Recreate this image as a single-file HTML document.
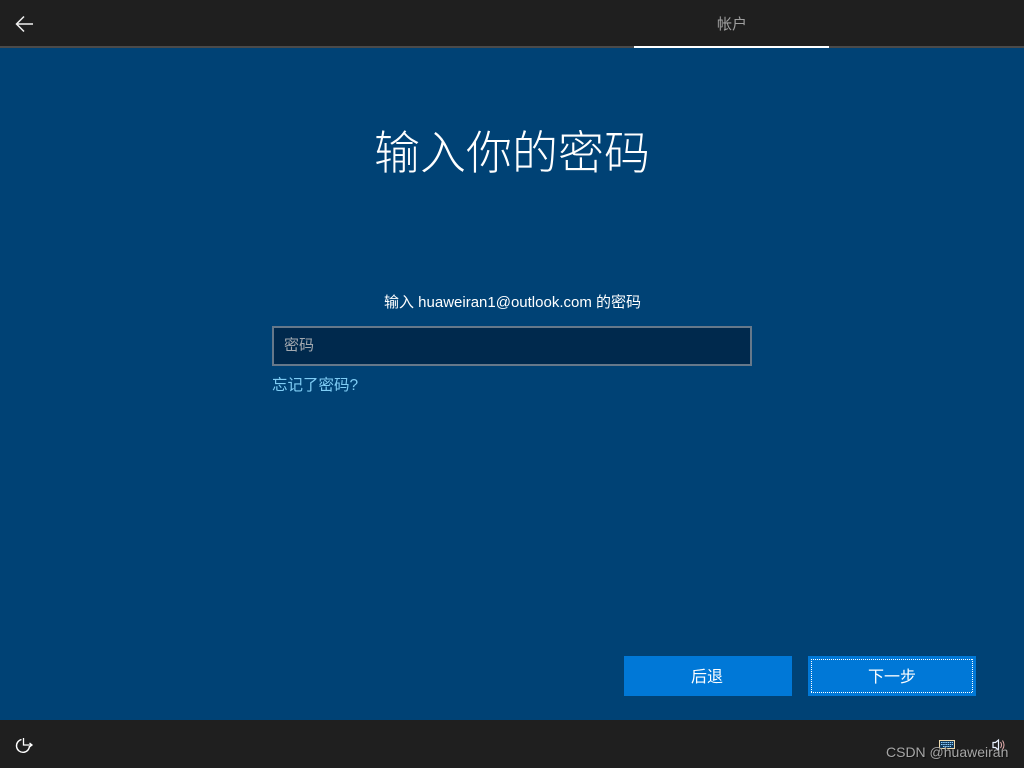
<!DOCTYPE html>
<html lang="zh">
<head>
<meta charset="utf-8">
<style>
html,body{margin:0;padding:0;width:1024px;height:768px;overflow:hidden;background:#004275;font-family:"Liberation Sans","Noto Sans CJK SC",sans-serif;color:#fff}
div,svg{position:absolute}
.t{white-space:nowrap;line-height:1}
</style>
</head>
<body>
<div style="left:0;top:0;width:1024px;height:46px;background:#1f1f1f"></div>
<div style="left:0;top:46px;width:1024px;height:2px;background:#4a4a4a"></div>
<div style="left:634px;top:46px;width:195px;height:2px;background:#fff"></div>
<svg style="left:0;top:0" width="50" height="46" viewBox="0 0 50 46"><path d="M33 24H16.5M24 16.5L16.5 24L24 31.5" fill="none" stroke="#f0f0f0" stroke-width="1.5"/></svg>
<div class="t" style="left:717px;top:17px;font-size:15px;color:#a0a0a0">帐户</div>

<div class="t" style="left:374px;top:130px;font-size:46px;font-weight:300;width:276px;letter-spacing:0">输入你的密码</div>

<div class="t" style="left:384px;top:295px;font-size:15px">输入 huaweiran1@outlook.com 的密码</div>
<div style="left:272px;top:326px;width:476px;height:36px;border:2px solid #66788a;background:#00294d"></div>
<div class="t" style="left:284px;top:338px;font-size:15px;color:#a3a9b0">密码</div>
<div class="t" style="left:272px;top:378px;font-size:15.5px;color:#7fcdf5">忘记了密码?</div>

<div style="left:624px;top:656px;width:168px;height:40px;background:#0078d7"></div>
<div class="t" style="left:691px;top:670px;font-size:16px">后退</div>
<div style="left:808px;top:656px;width:168px;height:40px;background:#0078d7"></div>
<svg style="left:808px;top:656px" width="168" height="40" viewBox="0 0 168 40" shape-rendering="crispEdges"><path d="M3 3.5H165M3 36.5H165M3.5 3V37M164.5 3V37" fill="none" stroke="#fff" stroke-width="1" stroke-dasharray="1 1"/></svg>
<div class="t" style="left:868px;top:670px;font-size:16px">下一步</div>

<div style="left:0;top:720px;width:1024px;height:48px;background:#1f1f1f"></div>
<svg style="left:0;top:720px" width="50" height="48" viewBox="0 0 50 48"><path d="M21.5 19.5A6.5 6.5 0 1 0 29.5 26" fill="none" stroke="#ffffff" stroke-width="1.4"/><path d="M23.5 18V25H31.5M29.5 23L32 25L29.5 27" fill="none" stroke="#ffffff" stroke-width="1.3"/></svg>
<svg style="left:930px;top:730px" width="80" height="24" viewBox="0 0 80 24"><rect x="9.5" y="10.5" width="15" height="8" fill="#123a5c" stroke="#f0dcae"/><path d="M11 12.5H23M11 14.5H23M13 16.5H21" stroke="#8fd0ff" stroke-width="1" stroke-dasharray="1.5 .7"/><path d="M63 12.5H65.5L68.5 10V20L65.5 17.5H63Z" fill="#1f1f1f" stroke="#eaf2ff" stroke-width="1.2"/><path d="M70.5 12Q72.5 15 70.5 18M72.5 10.5Q75.5 15 72.5 19.5" fill="none" stroke="#e8b0b0" stroke-width="1"/></svg>
<div class="t" style="left:886px;top:745px;font-size:14px;color:#a6a6a6;text-shadow:1px 1px 1px #111">CSDN @huaweiran</div>
</body>
</html>
